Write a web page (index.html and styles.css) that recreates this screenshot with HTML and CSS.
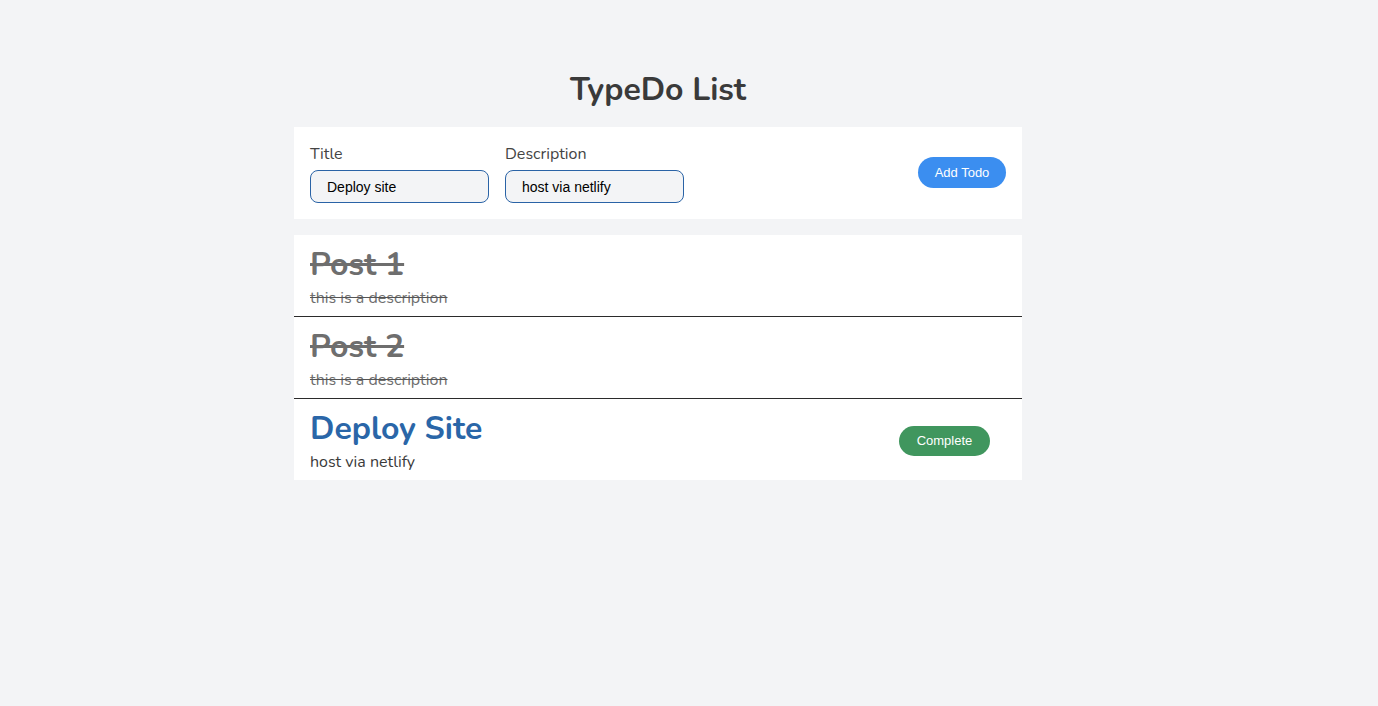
FILE: index.html
```html
<!DOCTYPE html>
<html lang="en">
<head>
<meta charset="utf-8">
<title>TypeDo List</title>
<link rel="stylesheet" href="styles.css">
</head>
<body>
<main class="app">
  <h1 class="app-title">TypeDo List</h1>
  <form class="todo-form">
    <div class="fields">
      <label class="field">
        <span class="field-label">Title</span>
        <input class="field-input" type="text" value="Deploy site">
      </label>
      <label class="field">
        <span class="field-label">Description</span>
        <input class="field-input" type="text" value="host via netlify">
      </label>
    </div>
    <button class="btn btn-add" type="button">Add Todo</button>
  </form>
  <ul class="todo-list">
    <li class="todo done">
      <div class="todo-text">
        <h2 class="todo-title">Post 1</h2>
        <p class="todo-desc">this is a description</p>
      </div>
    </li>
    <li class="todo done">
      <div class="todo-text">
        <h2 class="todo-title">Post 2</h2>
        <p class="todo-desc">this is a description</p>
      </div>
    </li>
    <li class="todo">
      <div class="todo-text">
        <h2 class="todo-title">Deploy Site</h2>
        <p class="todo-desc">host via netlify</p>
      </div>
      <button class="btn btn-complete" type="button">Complete</button>
    </li>
  </ul>
</main>
</body>
</html>
```

FILE: styles.css
```css
* { box-sizing: border-box; }
html, body { margin: 0; padding: 0; }
body {
  background: #f3f4f6;
  font-family: "Nunito", "Lato", "Noto Sans", sans-serif;
  color: #3a3a3a;
}
.app {
  width: 728px;
  margin: 0 0 0 294px;
  padding-top: 70px;
}
.app-title {
  margin: 0 0 17px;
  text-align: center;
  font-size: 32px;
  line-height: 40px;
  font-weight: 700;
  color: #3a3a3a;
}
.todo-form {
  background: #fff;
  padding: 16px;
  display: flex;
  align-items: center;
  justify-content: space-between;
  margin: 0 0 16px;
}
.fields { display: flex; gap: 16px; }
.field { display: flex; flex-direction: column; gap: 5px; }
.field-label {
  font-size: 16px;
  line-height: 22px;
  color: #444;
}
.field-input {
  width: 179px;
  height: 33px;
  border: 1px solid #2a63a6;
  border-radius: 8px;
  background: #f3f4f6;
  padding: 0 16px;
  font-family: "Liberation Sans", Arial, sans-serif;
  font-size: 14px;
  color: #000;
  outline: none;
}
.btn {
  border: none;
  border-radius: 999px;
  color: #fff;
  font-family: "Liberation Sans", Arial, sans-serif;
  font-size: 13px;
  cursor: pointer;
}
.btn-add {
  width: 88px;
  height: 31px;
  background: #3b8ef0;
  margin-bottom: 1px;
}
.btn-complete {
  width: 91px;
  height: 30px;
  background: #40965e;
  margin-right: 16px;
  margin-bottom: 1px;
}
.todo-list {
  list-style: none;
  margin: 0;
  padding: 0;
}
.todo {
  background: #fff;
  padding: 9px 16px 6px;
  display: flex;
  align-items: center;
  justify-content: space-between;
  border-bottom: 1px solid #2b2b2b;
}
.todo:last-child { border-bottom: none; }
.todo-title {
  margin: 0;
  font-size: 32px;
  line-height: 42px;
  font-weight: 700;
  color: #2a66a8;
}
.todo-desc {
  margin: 0;
  font-size: 16px;
  line-height: 24px;
  color: #3a3a3a;
}
.done .todo-title,
.done .todo-desc {
  color: #6e6e6e;
  text-decoration: line-through;
}
.done .todo-desc { text-decoration-color: #555; }
```
